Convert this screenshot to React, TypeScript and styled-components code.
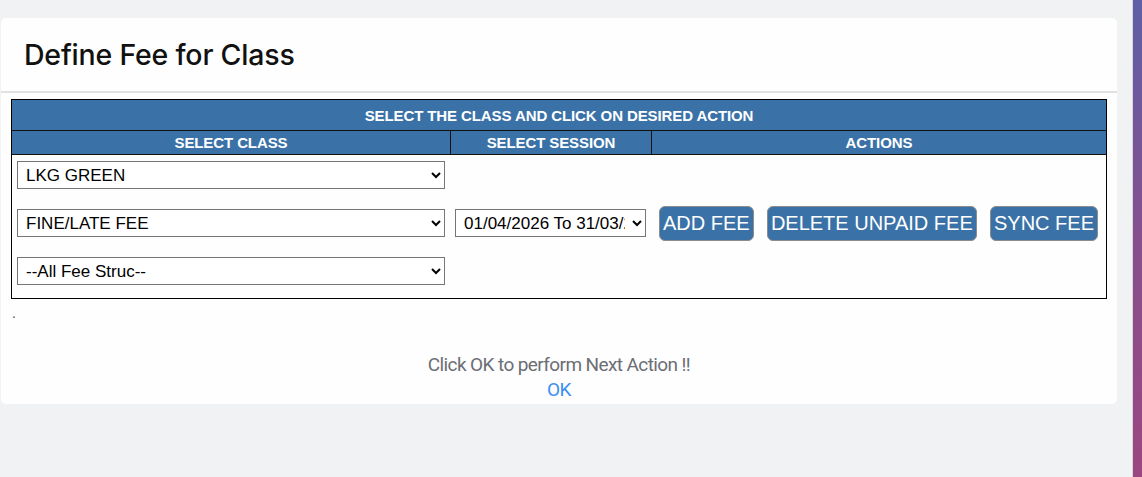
import React from 'react'
import styled, { createGlobalStyle } from 'styled-components'

const GlobalStyle = createGlobalStyle`
  html, body {
    margin: 0;
    padding: 0;
    height: 100%;
    background: #f1f2f4;
    overflow: hidden;
  }
  #root {
    height: 100%;
  }
`;

const Screen = styled.div`
  display: flex;
  height: 477px;
  width: 1142px;
`;

const Main = styled.div`
  flex: 0 0 1132px;
  padding: 18px 15px 0 1px;
  box-sizing: border-box;
`;

const SideStrip = styled.div`
  flex: 1;
  border-left: 1px solid #d6d6dc;
  background: linear-gradient(180deg, #5d5fa6 0%, #864f8e 50%, #9b4680 100%);
`;

const Card = styled.div`
  background: #fefefe;
  border-radius: 5px;
  padding-bottom: 2px;
`;

const CardHeader = styled.div`
  height: 73px;
  display: flex;
  align-items: center;
  padding-left: 23px;
  border-bottom: 2px solid #e1e1e3;
`;

const Title = styled.h1`
  margin: 0;
  font-family: Inter, "Noto Sans", sans-serif;
  font-weight: 500;
  font-size: 28.5px;
  letter-spacing: -0.2px;
  color: #111;
`;

const CardBody = styled.div`
  padding: 6px 10px 0 10px;
`;

const FeeTable = styled.div`
  border: 1px solid #000;
  font-family: "Liberation Sans", Arial, sans-serif;
`;

const HeadRow = styled.div<{ $h: number }>`
  display: grid;
  grid-template-columns: 438px 201px 1fr;
  height: ${p => p.$h}px;
  background: #3a72a7;
  border-bottom: 1px solid #111;
`;

const HeadCell = styled.div<{ $span?: boolean; $divider?: boolean }>`
  grid-column: ${p => (p.$span ? '1 / -1' : 'auto')};
  display: flex;
  align-items: center;
  justify-content: center;
  color: #fff;
  font-weight: bold;
  font-size: 15px;
  letter-spacing: -0.1px;
  border-left: ${p => (p.$divider ? '1px solid #111' : 'none')};
`;

const BodyRow = styled.div`
  display: grid;
  grid-template-columns: 438px 201px 1fr;
  align-items: center;
  padding: 6px 0 13px;
`;

const SelectStack = styled.div`
  display: flex;
  flex-direction: column;
  gap: 20px;
  padding: 0 5px;
`;

const Cell = styled.div`
  padding: 0 5px;
`;

const Select = styled.select`
  width: 100%;
  height: 28px;
  font-family: "Liberation Sans", Arial, sans-serif;
  font-size: 17px;
  color: #000;
  background: #fff;
  border: 1px solid #767676;
  border-radius: 0;
  padding: 0 4px;
`;

const Actions = styled.div`
  display: flex;
  justify-content: space-between;
  padding: 0 8px;
`;

const ActionButton = styled.button`
  height: 35px;
  padding: 0 3px;
  font-family: "Liberation Sans", Arial, sans-serif;
  font-size: 20px;
  color: #fff;
  background: #3a72a7;
  border: 1px solid #8c8c8c;
  border-radius: 6px;
  white-space: nowrap;
`;

const Dot = styled.div`
  margin-top: 6px;
  padding-left: 1px;
  font-family: "Liberation Sans", Arial, sans-serif;
  font-size: 14px;
  line-height: 16px;
  color: #555;
`;

const Notice = styled.div`
  margin-top: 31px;
  text-align: center;
  font-family: Roboto, "Noto Sans", sans-serif;
  font-size: 19px;
  letter-spacing: -0.6px;
`;

const NoticeText = styled.div`
  line-height: 25px;
  color: #6b6e74;
`;

const OkLink = styled.a`
  display: inline-block;
  line-height: 25px;
  color: #3d8ef0;
  cursor: pointer;
`;

export default function App() {
  return (
    <>
      <GlobalStyle />
      <Screen>
        <Main>
          <Card>
            <CardHeader>
              <Title>Define Fee for Class</Title>
            </CardHeader>
            <CardBody>
              <FeeTable>
                <HeadRow $h={30}>
                  <HeadCell $span>SELECT THE CLASS AND CLICK ON DESIRED ACTION</HeadCell>
                </HeadRow>
                <HeadRow $h={23}>
                  <HeadCell>SELECT CLASS</HeadCell>
                  <HeadCell $divider>SELECT SESSION</HeadCell>
                  <HeadCell $divider>ACTIONS</HeadCell>
                </HeadRow>
                <BodyRow>
                  <SelectStack>
                    <Select defaultValue="lkg">
                      <option value="lkg">LKG GREEN</option>
                    </Select>
                    <Select defaultValue="fine">
                      <option value="fine">FINE/LATE FEE</option>
                    </Select>
                    <Select defaultValue="all">
                      <option value="all">--All Fee Struc--</option>
                    </Select>
                  </SelectStack>
                  <Cell>
                    <Select defaultValue="2026">
                      <option value="2026">01/04/2026 To 31/03/2027</option>
                    </Select>
                  </Cell>
                  <Actions>
                    <ActionButton>ADD FEE</ActionButton>
                    <ActionButton>DELETE UNPAID FEE</ActionButton>
                    <ActionButton>SYNC FEE</ActionButton>
                  </Actions>
                </BodyRow>
              </FeeTable>
              <Dot>.</Dot>
              <Notice>
                <NoticeText>Click OK to perform Next Action !!</NoticeText>
                <OkLink>OK</OkLink>
              </Notice>
            </CardBody>
          </Card>
        </Main>
        <SideStrip />
      </Screen>
    </>
  )
}
